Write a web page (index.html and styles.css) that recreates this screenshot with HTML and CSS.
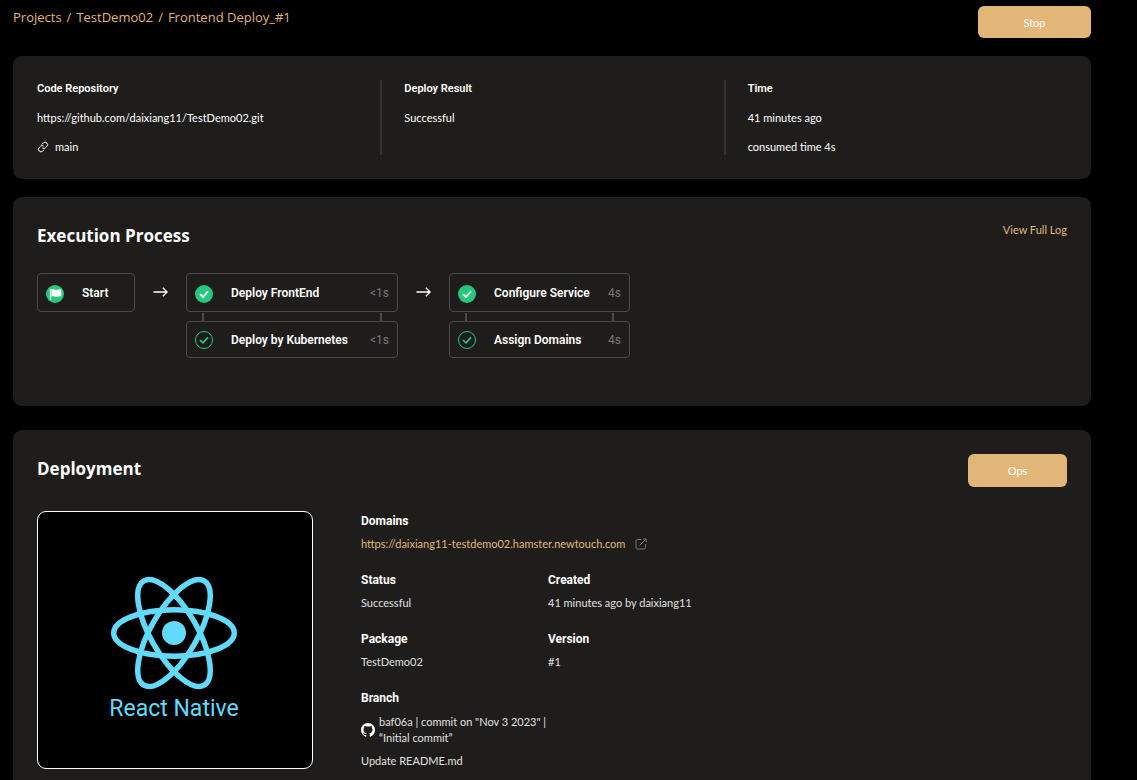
FILE: index.html
```html
<!DOCTYPE html>
<html lang="en">
<head>
<meta charset="utf-8">
<title>Frontend Deploy_#1</title>
<link rel="stylesheet" href="styles.css">
</head>
<body>
<svg class="defs" aria-hidden="true">
  <symbol id="done" viewBox="0 0 18 18"><circle cx="9" cy="9" r="9" fill="#27c77d"/><path d="M5 9.2l3 2.8 5-5.6" fill="none" stroke="#fff" stroke-width="1.8"/></symbol>
  <symbol id="done-outline" viewBox="0 0 18 18"><circle cx="9" cy="9" r="8.5" fill="none" stroke="#27c77d"/><path d="M5 9.2l3 2.6 5-5.4" fill="none" stroke="#27c77d" stroke-width="1.6"/></symbol>
  <symbol id="arrow" viewBox="0 0 16 12"><path d="M0.5 6h14.5M10.5 1.5L15 6l-4.5 4.5" fill="none" stroke="#fff" stroke-width="1.4"/></symbol>
</svg>
<main class="page">
  <header class="topbar">
    <nav class="crumbs" aria-label="Breadcrumb"><a href="#">Projects</a><span>/</span><a href="#">TestDemo02</a><span>/</span><a href="#">Frontend Deploy_#1</a></nav>
    <button class="btn btn-stop" type="button">Stop</button>
  </header>

  <section class="card summary">
    <div class="summary-col">
      <h3>Code Repository</h3>
      <p>https://github.com/daixiang11/TestDemo02.git</p>
      <p class="branch"><svg class="link-icon" viewBox="0 0 24 24" aria-hidden="true"><path d="M9.500 7l3.100-3.100a4.800 4.800 0 0 1 7 0 4.800 4.800 0 0 1 0 7L16.800 13.600a4.800 4.800 0 0 1-6 .4M14.500 17l-3.100 3.100a4.800 4.800 0 0 1-7 0 4.800 4.800 0 0 1 0-7L7.200 10.400a4.800 4.800 0 0 1 6-.4" fill="none" stroke="#fff" stroke-width="2"/></svg>main</p>
    </div>
    <div class="summary-col">
      <h3>Deploy Result</h3>
      <p>Successful</p>
    </div>
    <div class="summary-col">
      <h3>Time</h3>
      <p>41 minutes ago</p>
      <p>consumed time 4s</p>
    </div>
  </section>

  <section class="card process">
    <div class="card-head">
      <h2>Execution Process</h2>
      <a class="log-link" href="#">View Full Log</a>
    </div>
    <div class="flow">
      <div class="stage stage-start">
        <div class="node main-node"><svg class="state" viewBox="0 0 18 18" aria-hidden="true"><circle cx="9" cy="9" r="9" fill="#27c77d"/><path d="M4.500 4v11" stroke="#fff" stroke-width="1.200"/><path d="M5.500 4.500c2-1 3.500.800 5.500.300 1.500-.4 2.500-.8 4.300-.3v7c-1.800-.5-2.800-.1-4.300.3-2 .5-3.500-1.300-5.500-.3z" fill="#fff"/></svg><span>Start</span></div>
      </div>
      <svg class="arrow" aria-hidden="true"><use href="#arrow"/></svg>
      <div class="stage stage-deploy">
        <div class="node main-node"><svg class="state" aria-hidden="true"><use href="#done"/></svg><span>Deploy FrontEnd</span><time>&lt;1s</time></div>
        <div class="joint"></div>
        <div class="node"><svg class="state" aria-hidden="true"><use href="#done-outline"/></svg><span>Deploy by Kubernetes</span><time>&lt;1s</time></div>
      </div>
      <svg class="arrow" aria-hidden="true"><use href="#arrow"/></svg>
      <div class="stage stage-service">
        <div class="node main-node"><svg class="state" aria-hidden="true"><use href="#done"/></svg><span>Configure Service</span><time>4s</time></div>
        <div class="joint"></div>
        <div class="node"><svg class="state" aria-hidden="true"><use href="#done-outline"/></svg><span>Assign Domains</span><time>4s</time></div>
      </div>
    </div>
  </section>

  <section class="card deployment">
    <div class="card-head">
      <h2>Deployment</h2>
      <button class="btn btn-ops" type="button">Ops</button>
    </div>
    <div class="deploy-body">
      <figure class="preview">
        <svg class="react" viewBox="-64 -57 128 114" aria-hidden="true">
          <g fill="none" stroke="#61dafb" stroke-width="5.500"><ellipse rx="60.300" ry="23.200"/><ellipse rx="60.300" ry="23.200" transform="rotate(60)"/><ellipse rx="60.300" ry="23.200" transform="rotate(120)"/></g>
          <circle r="12" fill="#61dafb"/>
        </svg>
        <figcaption>React Native</figcaption>
      </figure>
      <dl class="details">
        <div class="wide"><dt>Domains</dt><dd class="domain"><a href="#">https://daixiang11-testdemo02.hamster.newtouch.com</a><svg class="open-icon" viewBox="0 0 12 12" aria-hidden="true"><path d="M6.500 1.500H2.500a1.500 1.500 0 0 0-1.500 1.500v6.500A1.500 1.500 0 0 0 2.500 11h6.500a1.500 1.500 0 0 0 1.500-1.500V6M4.500 7.500L11 1M8 1h3.200v3.200" fill="none" stroke="#777"/></svg></dd></div>
        <div><dt>Status</dt><dd>Successful</dd></div>
        <div><dt>Created</dt><dd>41 minutes ago by daixiang11</dd></div>
        <div><dt>Package</dt><dd>TestDemo02</dd></div>
        <div><dt>Version</dt><dd>#1</dd></div>
        <div class="wide"><dt>Branch</dt>
          <dd class="commit"><svg class="github" viewBox="0 0 16 16" aria-hidden="true"><path fill="#fff" d="M8 0C3.580 0 0 3.580 0 8c0 3.540 2.290 6.530 5.470 7.590.4.070.55-.17.55-.38 0-.19-.01-.82-.01-1.490-2.010.37-2.530-.49-2.690-.94-.09-.23-.48-.94-.82-1.130-.28-.15-.68-.52-.01-.53.63-.01 1.080.58 1.230.82.72 1.210 1.870.87 2.330.66.07-.52.28-.87.51-1.070-1.780-.2-3.640-.89-3.640-3.950 0-.87.31-1.590.82-2.150-.08-.2-.36-1.020.08-2.120 0 0 .67-.21 2.200.82.64-.18 1.320-.27 2-.27s1.360.09 2 .27c1.530-1.040 2.200-.82 2.200-.82.44 1.100.16 1.920.08 2.120.51.56.82 1.270.82 2.150 0 3.070-1.870 3.750-3.650 3.950.29.25.54.73.54 1.480 0 1.070-.01 1.930-.01 2.200 0 .21.15.46.55.38A8.010 8.010 0 0 0 16 8c0-4.420-3.580-8-8-8z"/></svg><span>baf06a | commit on "Nov 3 2023" |<br>“Initial commit”</span></dd>
          <dd>Update README.md</dd></div>
      </dl>
    </div>
  </section>
</main>
</body>
</html>
```
FILE: styles.css
```css
* { box-sizing: border-box; }
body {
  margin: 0;
  background: #000;
  color: #fff;
  font-family: Lato, "Noto Sans", sans-serif;
  font-size: 11px;
  line-height: 17px;
}
h2, h3, p, dl, dd, figure { margin: 0; }
a { color: #e2b578; text-decoration: none; }
.defs { display: none; }
.page {
  display: flex;
  flex-direction: column;
  min-height: 100vh;
  padding: 6px 46px 0 13px;
}
.topbar {
  display: flex;
  justify-content: space-between;
  align-items: flex-start;
  margin-bottom: 18px;
}
.crumbs {
  display: flex;
  gap: 5px;
  color: #e2b578;
  font-family: "Open Sans", "Noto Sans", sans-serif;
  font-size: 13px;
  line-height: 22px;
}
.btn {
  border: 0;
  border-radius: 6px;
  background: #e2b578;
  color: #fff;
  font: inherit;
}
.btn-stop { width: 113px; height: 32px; }
.btn-ops { width: 99px; height: 33px; }
.card {
  border-radius: 9px;
  background: #1f1d1c;
  padding: 24px;
}
.summary {
  display: grid;
  grid-template-columns: repeat(3, 1fr);
  margin-bottom: 18px;
}
.summary-col {
  display: flex;
  flex-direction: column;
  gap: 12px;
}
.summary-col + .summary-col {
  border-left: 2px solid #333;
  padding-left: 22px;
}
h3, .node, dt { font-family: Roboto, "Noto Sans", sans-serif; }
h3 { font-size: 11px; font-weight: 600; }
.branch { display: flex; align-items: center; gap: 6px; }
.link-icon { width: 12px; height: 12px; }
.card-head {
  display: flex;
  justify-content: space-between;
  align-items: flex-start;
}
h2 {
  font-family: "Open Sans", "Noto Sans", sans-serif;
  font-size: 17px;
  font-weight: 700;
  line-height: 30px;
}
.process { margin-bottom: 24px; padding-bottom: 48px; }
.flow {
  display: flex;
  align-items: flex-start;
  gap: 18px;
  margin-top: 22px;
}
.stage-start { width: 98px; }
.stage-deploy { width: 212px; }
.stage-service { width: 181px; }
.node {
  display: flex;
  align-items: center;
  height: 37px;
  padding: 0 8px;
  border: 1px solid #4a4a4a;
  border-radius: 4px;
  font-size: 12px;
  font-weight: 600;
  line-height: 18px;
}
.main-node { height: 39px; }
.main-node .state { margin-top: 3px; }
.state { width: 18px; height: 18px; margin-right: 18px; }
.node time { margin-left: auto; color: #777; font-weight: 400; }
.joint {
  height: 8px;
  margin: 1px 16px 0;
  border: solid #4a4a4a;
  border-width: 0 2px;
}
.arrow { width: 15px; height: 12px; margin-top: 13px; }
.deployment {
  flex: 1;
  border-radius: 9px 9px 0 0;
  padding-bottom: 10px;
}
.deploy-body {
  display: flex;
  align-items: flex-start;
  gap: 48px;
  margin-top: 24px;
}
.preview {
  display: flex;
  flex-direction: column;
  align-items: center;
  width: 276px;
  height: 258px;
  padding: 64px 2px 0 0;
  border: 1px solid #fff;
  border-radius: 9px;
  background: #000;
}
.react { width: 128px; height: 114px; }
.preview figcaption {
  color: #61dafb;
  font: 23px/38px Roboto, sans-serif;
}
.details {
  display: grid;
  grid-template-columns: 187px auto;
  row-gap: 18px;
}
.wide { grid-column: 1 / -1; }
dt { font-size: 12px; font-weight: 700; line-height: 20px; }
dd { margin-top: 4px; color: #e0e0e0; }
.domain { display: flex; align-items: center; gap: 10px; }
.open-icon { width: 12px; height: 12px; }
.commit { display: flex; align-items: center; gap: 4px; padding: 2px 0; line-height: 16px; }
.github { width: 14px; height: 14px; }
```
